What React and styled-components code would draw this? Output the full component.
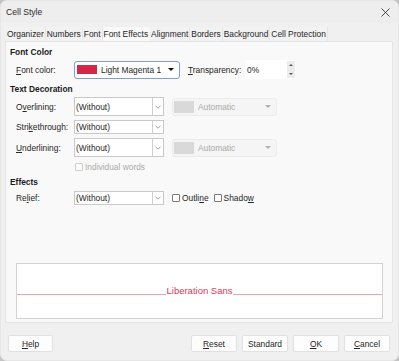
import React from 'react'
import styled, { createGlobalStyle } from 'styled-components'

const Global = createGlobalStyle`
  html, body {
    margin: 0;
    padding: 0;
    background: #c4c4c4;
  }
  body {
    font-family: "Liberation Sans", Arial, sans-serif;
    font-size: 8.4px;
    color: #1e1e1e;
  }
`

const Window = styled.div`
  width: 399px;
  height: 361px;
  box-sizing: border-box;
  background: #f0f0f0;
  border: 1px solid #e6e6e6;
  border-radius: 7px;
  display: flex;
  flex-direction: column;
  overflow: hidden;
`

const TitleBar = styled.div`
  height: 22px;
  display: flex;
  align-items: center;
  justify-content: space-between;
  padding: 0 8px 0 5px;
  background: #eeeeee;
`

const Title = styled.span`
  font-size: 8.6px;
  color: #2a2a2a;
`

const TabRow = styled.div`
  display: flex;
  margin: 4px 0 0 5px;
  height: 14px;
`

const Tab = styled.div`
  padding: 0 1px;
  line-height: 14px;
  background: ${p => (p.$active ? '#f9f9f9' : '#f2f2f2')};
  border-right: 1px solid ${p => (p.$active ? '#f9f9f9' : '#e6e6e6')};
  color: #262626;
  white-space: nowrap;
`

const Panel = styled.div`
  margin: 0 5px 0 4px;
  height: 282px;
  box-sizing: border-box;
  background: #f9f9f9;
  border: 1px solid #e4e4e4;
  padding: 4px 8px 3px 4px;
  display: flex;
  flex-direction: column;
`

const Heading = styled.div`
  font-weight: bold;
  line-height: 12px;
  margin-top: ${p => p.$mt || 0}px;
  color: #1a1a1a;
`

const Row = styled.div`
  display: flex;
  align-items: center;
  padding-left: 6px;
  margin-top: ${p => p.$mt || 0}px;
  height: ${p => p.$h || 19}px;
`

const Label = styled.span`
  width: ${p => p.$w || 58}px;
  flex: none;
  white-space: nowrap;
  color: #262626;
`

const ColorDrop = styled.div`
  width: 106px;
  height: 18px;
  box-sizing: border-box;
  border: 1px solid #7f9dd6;
  border-radius: 3px;
  background: #fff;
  display: flex;
  align-items: center;
  padding: 0 0 0 2px;
  margin-right: 8px;
`

const Swatch = styled.span`
  width: 20px;
  height: ${p => p.$h || 9}px;
  background: ${p => p.$c};
  margin-right: 4px;
  flex: none;
`

const DropText = styled.span`
  flex: 1;
  color: ${p => (p.$muted ? '#a9a9a9' : '#1e1e1e')};
`

const Caret = styled.span`
  width: 0;
  height: 0;
  border-left: 3px solid transparent;
  border-right: 3px solid transparent;
  border-top: 3px solid ${p => (p.$muted ? '#b0b0b0' : '#111')};
  margin-right: 5px;
`

const SpinField = styled.div`
  width: 51px;
  height: 19px;
  box-sizing: border-box;
  background: #fff;
  display: flex;
  align-items: center;
  padding-left: 2px;
`

const SpinButtons = styled.div`
  margin-left: auto;
  width: 8px;
  height: 17px;
  margin-right: 1px;
  background: #ececec;
  display: flex;
  flex-direction: column;
  align-items: center;
  justify-content: space-around;
`

const SpinArrow = styled.span`
  width: 0;
  height: 0;
  border-left: 2px solid transparent;
  border-right: 2px solid transparent;
  ${p => (p.$up ? 'border-bottom: 2px solid #555;' : 'border-top: 2px solid #555;')}
`

const Combo = styled.div`
  width: 90px;
  height: 100%;
  box-sizing: border-box;
  border: 1px solid #c9c9c9;
  background: #fff;
  display: flex;
  align-items: center;
  flex: none;
`

const ComboText = styled.span`
  flex: 1;
  padding-left: 1px;
`

const ComboButton = styled.span`
  width: 10px;
  height: 100%;
  border-left: 1px solid #cfcfcf;
  display: flex;
  align-items: center;
  justify-content: center;
`

const AutoColor = styled.div`
  margin-left: 8px;
  width: 105px;
  height: 18px;
  box-sizing: border-box;
  border: 1px solid #ececec;
  border-radius: 3px;
  background: #f5f5f5;
  display: flex;
  align-items: center;
  padding-left: 1px;
`

const CheckWrap = styled.label`
  display: flex;
  align-items: center;
  margin-left: ${p => p.$ml || 0}px;
  color: ${p => (p.$disabled ? '#a9a9a9' : '#262626')};
  height: ${p => p.$h || 12}px;
  margin-top: ${p => p.$mt || 0}px;
`

const Box = styled.span`
  width: 6px;
  height: 6px;
  border: 1px solid ${p => (p.$disabled ? '#cdcdcd' : '#7a7a7a')};
  border-radius: 1px;
  background: #fff;
  margin-right: 2px;
  flex: none;
`

const Preview = styled.div`
  margin: auto 1px 0 6px;
  height: 56px;
  box-sizing: border-box;
  background: #fff;
  border: 1px solid #d3d3d3;
  position: relative;
  display: flex;
  justify-content: center;
`

const Baseline = styled.div`
  position: absolute;
  left: 0;
  right: 0;
  top: 30px;
  height: 1px;
  background: #eba2ab;
`

const PreviewText = styled.span`
  margin-top: 22px;
  font-size: 9.5px;
  line-height: 10px;
  height: 10px;
  color: #d73b58;
  background: #fff;
  position: relative;
  z-index: 1;
`

const Footer = styled.div`
  display: flex;
  padding: 12px 8px 0 7px;
  gap: 5px;
`

const Button = styled.button`
  width: ${p => p.$w || 46}px;
  height: 17px;
  box-sizing: border-box;
  border: 1px solid #e1e1e1;
  border-radius: 2px;
  background: #fdfdfd;
  font: inherit;
  color: #262626;
  padding: 0;
  margin-left: ${p => (p.$push ? 'auto' : '0')};
`

const Chevron = () => (
  <svg width="6" height="4" viewBox="0 0 6 4">
    <path d="M0.5 0.8 L3 3.2 L5.5 0.8" fill="none" stroke="#8a8a8a" strokeWidth="0.8" />
  </svg>
)

const Close = () => (
  <svg width="9" height="9" viewBox="0 0 9 9">
    <path d="M0.5 0.5 L8.5 8.5 M8.5 0.5 L0.5 8.5" stroke="#333" strokeWidth="0.9" />
  </svg>
)

const ComboBox = ({ value }) => (
  <Combo>
    <ComboText>{value}</ComboText>
    <ComboButton><Chevron /></ComboButton>
  </Combo>
)

const Automatic = () => (
  <AutoColor>
    <Swatch $c="#d9d9d9" $h={12} />
    <DropText $muted>Automatic</DropText>
    <Caret $muted />
  </AutoColor>
)

const tabs = ['Organizer', 'Numbers', 'Font', 'Font Effects', 'Alignment', 'Borders', 'Background', 'Cell Protection']

export default function App() {
  return (
    <>
      <Global />
      <Window>
        <TitleBar>
          <Title>Cell Style</Title>
          <Close />
        </TitleBar>
        <TabRow>
          {tabs.map(t => (
            <Tab key={t} $active={t === 'Font Effects'}>{t}</Tab>
          ))}
        </TabRow>
        <Panel>
          <Heading>Font Color</Heading>
          <Row $mt={2} $h={19}>
            <Label><u>F</u>ont color:</Label>
            <ColorDrop>
              <Swatch $c="#d5264a" />
              <DropText>Light Magenta 1</DropText>
              <Caret />
            </ColorDrop>
            <Label $w={57}><u>T</u>ransparency:</Label>
            <SpinField>
              0%
              <SpinButtons>
                <SpinArrow $up />
                <SpinArrow />
              </SpinButtons>
            </SpinField>
          </Row>
          <Heading $mt={4}>Text Decoration</Heading>
          <Row $mt={2} $h={19}>
            <Label>O<u>v</u>erlining:</Label>
            <ComboBox value="(Without)" />
            <Automatic />
          </Row>
          <Row $mt={4} $h={14}>
            <Label>Stri<u>k</u>ethrough:</Label>
            <ComboBox value="(Without)" />
          </Row>
          <Row $mt={4} $h={19}>
            <Label><u>U</u>nderlining:</Label>
            <ComboBox value="(Without)" />
            <Automatic />
          </Row>
          <CheckWrap $ml={65} $mt={4} $disabled>
            <Box $disabled />
            Individual words
          </CheckWrap>
          <Heading $mt={3}>Effects</Heading>
          <Row $mt={3} $h={14}>
            <Label>Re<u>l</u>ief:</Label>
            <ComboBox value="(Without)" />
            <CheckWrap $ml={8}>
              <Box />
              Outli<u>n</u>e
            </CheckWrap>
            <CheckWrap $ml={5}>
              <Box />
              Shado<u>w</u>
            </CheckWrap>
          </Row>
          <Preview>
            <Baseline />
            <PreviewText>Liberation Sans</PreviewText>
          </Preview>
        </Panel>
        <Footer>
          <Button $w={45}><u>H</u>elp</Button>
          <Button $push><u>R</u>eset</Button>
          <Button>Standard</Button>
          <Button><u>O</u>K</Button>
          <Button><u>C</u>ancel</Button>
        </Footer>
      </Window>
    </>
  )
}
